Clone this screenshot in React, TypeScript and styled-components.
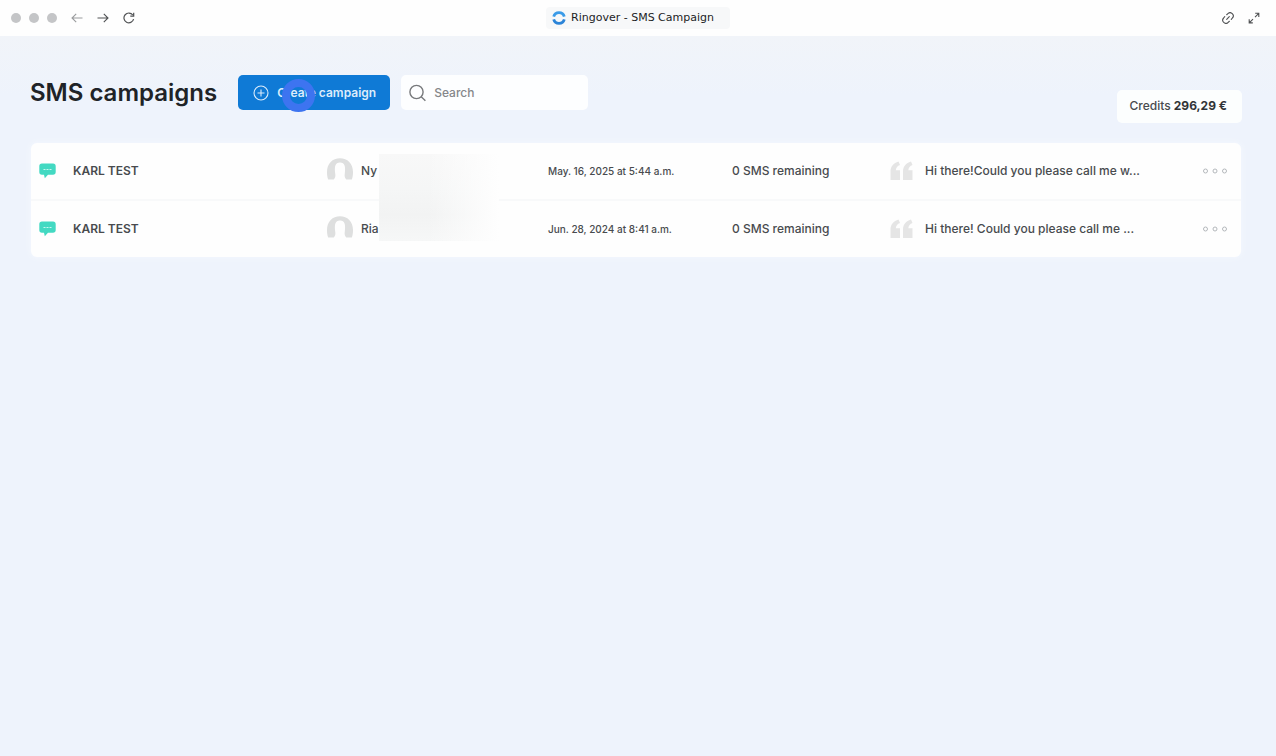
import React from "react";
import styled, { createGlobalStyle } from "styled-components";

const GlobalStyle = createGlobalStyle`
  *, *::before, *::after { box-sizing: border-box; }
  html, body, #root { min-height: 100vh; }
  body {
    margin: 0;
    background: #eef3fc;
    color: #484b4e;
    font-family: Inter, "Liberation Sans", sans-serif;
  }
`;

const TitleBar = styled.header`
  display: grid;
  grid-template-columns: 1fr auto 1fr;
  align-items: center;
  height: 36px;
  padding: 0 11px;
  background: #fefefe;
`;

const BarGroup = styled.div<{ $gap: number; $end?: boolean }>`
  display: flex;
  align-items: center;
  gap: ${(p) => p.$gap}px;
  padding-right: 5px;
  justify-content: ${(p) => (p.$end ? "flex-end" : "flex-start")};
`;

const Lights = styled.div`
  display: flex;
  gap: 8px;
`;

const Light = styled.span`
  width: 10px;
  height: 10px;
  border-radius: 50%;
  background: #c4c5c7;
`;

const IconButton = styled.button<{ $color?: string }>`
  display: flex;
  padding: 0;
  border: 0;
  background: none;
  color: ${(p) => p.$color ?? "#505254"};
  cursor: pointer;
`;

const TabTitle = styled.div`
  display: flex;
  align-items: center;
  gap: 5px;
  height: 22px;
  padding: 0 16px 0 6px;
  border-radius: 4px;
  background: #f7f8f9;
  color: #1c1d1f;
  font: 11px/16px "DejaVu Sans", sans-serif;
  white-space: nowrap;
`;

const Page = styled.main`
  padding: 39px 35px 40px 30px;
  background: linear-gradient(#f1f4f9, #eef3fc 60px);
`;

const PageHeader = styled.div`
  display: flex;
  align-items: flex-start;
  margin-bottom: 20px;
`;

const Heading = styled.h1`
  margin: 0 21px 0 0;
  color: #202327;
  font-size: 24px;
  font-weight: 600;
  line-height: 36px;
  white-space: nowrap;
`;

const CreateButton = styled.button`
  position: relative;
  display: flex;
  align-items: center;
  gap: 8px;
  height: 35px;
  margin-right: 11px;
  padding: 0 14px 0 15px;
  border: 0;
  border-radius: 5px;
  background: #0f7ad6;
  color: #dcecfb;
  font: 600 12px/20px Inter, sans-serif;
  white-space: nowrap;
  cursor: pointer;
`;

const ClickRing = styled.span`
  position: absolute;
  left: 44px;
  top: 4px;
  width: 33px;
  height: 33px;
  border: 8px solid #3d74f0;
  border-radius: 50%;
`;

const SearchBox = styled.label`
  display: flex;
  align-items: center;
  gap: 8px;
  width: 187px;
  min-width: 0;
  height: 35px;
  padding: 0 8px;
  border-radius: 5px;
  background: #fdfeff;
  color: #77797c;
`;

const SearchInput = styled.input`
  flex: 1;
  width: 100%;
  min-width: 0;
  padding: 0;
  border: 0;
  outline: 0;
  background: none;
  color: #3c4043;
  font: 500 12px/20px Inter, sans-serif;
  &::placeholder { color: #85878a; opacity: 1; }
`;

const Credits = styled.div`
  margin: 15px -1px 0 auto;
  padding: 0 15px 1px 12px;
  border-radius: 5px;
  background: #fcfefe;
  font-size: 12px;
  font-weight: 500;
  line-height: 32px;
  white-space: nowrap;
  strong { color: #303336; font-weight: 700; }
`;

const TableCard = styled.section`
  position: relative;
  margin-left: 1px;
  border-radius: 6px;
  background: #fefefe;
  box-shadow: 0 0 6px #f6f9fe;
`;

const CampaignTable = styled.table`
  width: 100%;
  border-collapse: collapse;
  table-layout: fixed;
`;

const Row = styled.tr`
  height: 57px;
  & + & { border-top: 2px solid #f8f9fa; }
`;

const Cell = styled.td<{ $size?: number; $weight?: number }>`
  padding: 0;
  font-size: ${(p) => p.$size ?? 12}px;
  font-weight: ${(p) => p.$weight ?? 500};
  line-height: 20px;
  white-space: nowrap;
  text-align: left;
`;

const CellContent = styled.div<{ $gap?: number; $indent?: number }>`
  display: flex;
  align-items: center;
  gap: ${(p) => p.$gap ?? 0}px;
  padding-left: ${(p) => p.$indent ?? 0}px;
`;

const Redaction = styled.div`
  position: absolute;
  left: 348px;
  top: 11px;
  width: 120px;
  height: 87px;
  background: linear-gradient(90deg, transparent 40%, #fefefe),
    linear-gradient(#f8f8f8, #f5f6f6 40%, #f2f3f3 70%, #f6f7f7);
`;

const ArrowIcon = ({ flip }: { flip?: boolean }) => (
  <svg width="12" height="12" viewBox="0 0 12 12" fill="none" stroke="currentColor" strokeWidth="1.1">
    <path d={flip ? "M11.5 6H1M5.2 1.8 1 6l4.2 4.2" : "M.5 6H11M6.8 1.8 11 6l-4.2 4.2"} />
  </svg>
);

const ReloadIcon = () => (
  <svg width="12" height="12" viewBox="0 0 12 12" fill="none" stroke="currentColor" strokeWidth="1.2">
    <path d="M10.6 7.2A4.9 4.9 0 1 1 9.8 3M10.7.8v3.4H7.3" />
  </svg>
);

const LinkIcon = () => (
  <svg width="12" height="12" viewBox="0 0 14 14" fill="none" stroke="currentColor" strokeWidth="1.3" strokeLinecap="round">
    <path d="M5.5 3.2 6.8 2a3.6 3.6 0 0 1 5.3 5l-1.3 1.5M8.6 10.8 7.2 12a3.6 3.6 0 0 1-5.3-5l1.3-1.5M5.5 8.5l3-3" />
  </svg>
);

const ExpandIcon = () => (
  <svg width="12" height="12" viewBox="0 0 12 12" fill="none" stroke="currentColor" strokeWidth="1.1">
    <path d="M7.2 1.3h3.6v3.6M10.8 1.3 7 5.1M4.8 10.9H1.2V7.3M1.2 10.9 5 7.1" />
  </svg>
);

const RingoverLogo = () => (
  <svg width="14" height="14" viewBox="0 0 14 14" fill="none" strokeWidth="2.8">
    <path d="M1.7 5.6a5.5 5.5 0 0 1 10.6 0" stroke="#3a9be8" />
    <path d="M1.7 8.4a5.5 5.5 0 0 0 10.6 0" stroke="#2b84d8" />
  </svg>
);

const PlusCircleIcon = () => (
  <svg width="16" height="16" viewBox="0 0 16 16" fill="none" stroke="currentColor" strokeWidth="1.1">
    <circle cx="8" cy="8" r="7" />
    <path d="M8 4.5v7M4.5 8h7" />
  </svg>
);

const SearchIcon = () => (
  <svg width="17" height="18" viewBox="0 0 17 18" fill="none" stroke="currentColor" strokeWidth="1.4">
    <circle cx="7.5" cy="8" r="6.6" />
    <path d="m12.2 12.8 4.2 4" />
  </svg>
);

const MessageIcon = () => (
  <svg width="17" height="16" viewBox="0 0 17 16">
    <path d="M3 .5h11c1.8 0 2.7 1 2.7 2.7V9c0 1.8-1 2.7-2.7 2.7H9L5.8 15.2 5 11.7H3C1.2 11.7.3 10.8.3 9V3.2C.3 1.5 1.2.5 3 .5Z" fill="#43d9c2" />
    <path d="M4.5 6.5h2M7.5 6.5h2M10.5 6.5h2" stroke="#c9f6ee" strokeWidth="1.2" />
  </svg>
);

const AvatarIcon = () => (
  <svg width="26" height="26" viewBox="0 0 26 26">
    <path d="M0 14C0 5.5 5.5.3 13 .3S26 5.5 26 14c0 3-.4 5.500-1.200 7.500h-5.500c-1.500-1.500-2-3.500-1.500-6C18.600 9 18 4.600 13 4.600S7.400 9 8.200 15.500c.5 2.500 0 4.500-1.500 6H1.200C.4 19.500 0 17 0 14Z" fill="#dedfdf" />
  </svg>
);

const QuoteIcon = () => (
  <svg width="23" height="20" viewBox="0 0 23 20" fill="#e5e5e5">
    <path d="M8.5.5 10 4C7.5 5 6 6.6 5.8 9.2H10V19H.5v-8.5C.5 5.5 3.5 2 8.5.5Z" />
    <path d="M21 .5 22.5 4c-2.5 1-4 2.6-4.2 5.2h4.200V19H13v-8.500c0-5 3-8.500 8-10Z" />
  </svg>
);

const MoreIcon = () => (
  <svg width="27" height="8" viewBox="0 0 27 8" fill="none" stroke="#b4b8bc">
    <circle cx="4.5" cy="4" r="2" />
    <circle cx="14" cy="4" r="2" />
    <circle cx="23.5" cy="4" r="2" />
  </svg>
);

const campaigns = [
  { name: "KARL TEST", contact: "Ny", date: "May. 16, 2025 at 5:44 a.m.", left: "0 SMS remaining", text: "Hi there!Could you please call me w..." },
  { name: "KARL TEST", contact: "Ria", date: "Jun. 28, 2024 at 8:41 a.m.", left: "0 SMS remaining", text: "Hi there! Could you please call me ..." },
];

export default function App() {
  return (
    <>
      <GlobalStyle />
      <TitleBar>
        <BarGroup $gap={14}>
          <Lights>
            <Light />
            <Light />
            <Light />
          </Lights>
          <IconButton aria-label="Back" $color="#9a9c9e"><ArrowIcon flip /></IconButton>
          <IconButton aria-label="Forward"><ArrowIcon /></IconButton>
          <IconButton aria-label="Reload"><ReloadIcon /></IconButton>
        </BarGroup>
        <TabTitle>
          <RingoverLogo />
          Ringover - SMS Campaign
        </TabTitle>
        <BarGroup $gap={14} $end>
          <IconButton aria-label="Copy link"><LinkIcon /></IconButton>
          <IconButton aria-label="Full screen"><ExpandIcon /></IconButton>
        </BarGroup>
      </TitleBar>
      <Page>
        <PageHeader>
          <Heading>SMS campaigns</Heading>
          <CreateButton>
            <PlusCircleIcon />
            Create campaign
            <ClickRing />
          </CreateButton>
          <SearchBox>
            <SearchIcon />
            <SearchInput type="search" placeholder="Search" aria-label="Search" />
          </SearchBox>
          <Credits>
            Credits <strong>296,29 €</strong>
          </Credits>
        </PageHeader>
        <TableCard>
          <CampaignTable aria-label="SMS campaigns">
            <colgroup>
              <col width="42" />
              <col width="254" />
              <col width="221" />
              <col width="184" />
              <col width="158" />
              <col />
              <col width="40" />
            </colgroup>
            <tbody>
              {campaigns.map((c) => (
                <Row key={c.date}>
                  <Cell><CellContent $indent={8}><MessageIcon /></CellContent></Cell>
                  <Cell $weight={600}>{c.name}</Cell>
                  <Cell><CellContent $gap={8}><AvatarIcon />{c.contact}</CellContent></Cell>
                  <Cell $size={10}>{c.date}</Cell>
                  <Cell>{c.left}</Cell>
                  <Cell><CellContent $gap={12}><QuoteIcon />{c.text}</CellContent></Cell>
                  <Cell><IconButton aria-label="More actions"><MoreIcon /></IconButton></Cell>
                </Row>
              ))}
            </tbody>
          </CampaignTable>
          <Redaction />
        </TableCard>
      </Page>
    </>
  );
}
